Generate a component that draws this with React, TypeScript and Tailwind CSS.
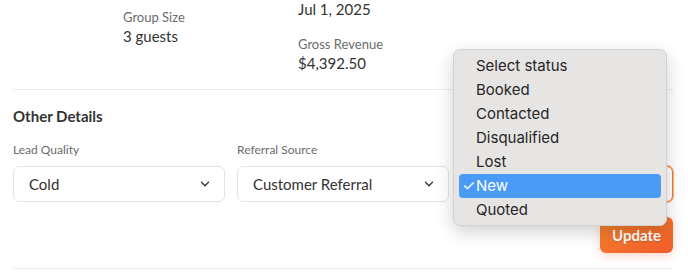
import React from 'react';
import { ChevronDown } from 'lucide-react';

const statusOptions = ['Select status', 'Booked', 'Contacted', 'Disqualified', 'Lost', 'New', 'Quoted'];

const SelectBox: React.FC<{ value?: string; focused?: boolean }> = ({ value, focused }) => (
  <div
    className={`flex h-[36px] items-center justify-between rounded-[6px] border bg-white pl-[15px] pr-[12px] text-[15px] text-[#333] ${
      focused ? 'border-[#f47a2c] ring-1 ring-[#f9b98a]' : 'border-[#e4e4e4]'
    }`}
  >
    <span>{value}</span>
    <ChevronDown className="h-[14px] w-[14px] text-[#333]" strokeWidth={2.2} />
  </div>
);

const StatusMenu: React.FC = () => (
  <div
    className="absolute left-[453px] top-[49px] w-[214px] rounded-[7px] border border-[#d2d1cf] bg-[#e6e5e3] px-[5px] pb-[3px] pt-[4px] shadow-[0_6px_18px_rgba(0,0,0,0.18)]"
    style={{ fontFamily: 'Inter, "Noto Sans", sans-serif' }}
  >
    {statusOptions.map(opt => {
      const selected = opt === 'New';
      return (
        <div
          key={opt}
          className={`relative flex h-[24px] items-center rounded-[4px] pl-[17px] text-[15px] ${
            selected ? 'bg-[#4a9bf8] text-white' : 'text-[#262626]'
          }`}
        >
          {selected && <span className="absolute left-[3px] text-[15px]">✓</span>}
          {opt}
        </div>
      );
    })}
  </div>
);

export default function App() {
  return (
    <div
      className="relative h-[275px] w-[688px] overflow-hidden bg-white pl-[13px] pr-[15px]"
      style={{ fontFamily: 'Lato, "Open Sans", sans-serif' }}
    >
      {/* Summary */}
      <div className="flex items-start pl-[110px]">
        <div className="w-[175px] pt-[8px]">
          <div className="text-[13px] leading-[18px] text-[#6b6b6b]">Group Size</div>
          <div className="mt-[1px] text-[15px] leading-[18px] text-[#333]">3 guests</div>
        </div>
        <div>
          <div className="text-[15px] leading-[18px] text-[#333]">Jul 1, 2025</div>
          <div className="mt-[17px] text-[13px] leading-[18px] text-[#6b6b6b]">Gross Revenue</div>
          <div className="mt-[1px] text-[15px] leading-[18px] text-[#333]">$4,392.50</div>
        </div>
      </div>

      <div className="mt-[17px] border-t border-[#ececec]" />

      {/* Other Details */}
      <h3 className="mt-[15px] text-[15px] font-bold leading-[22px] text-[#333]">Other Details</h3>

      <div className="mt-[15px] grid grid-cols-3 gap-[12px]">
        <div>
          <div className="mb-[8px] text-[12px] leading-[16px] text-[#6b6b6b]">Lead Quality</div>
          <SelectBox value="Cold" />
        </div>
        <div>
          <div className="mb-[8px] text-[12px] leading-[16px] text-[#6b6b6b]">Referral Source</div>
          <SelectBox value="Customer Referral" />
        </div>
        <div>
          {/* label sits under the open menu */}
          <div className="mb-[8px] h-[16px]" />
          <SelectBox focused />
        </div>
      </div>

      <div className="mt-[15px] flex justify-end">
        <button className="h-[36px] w-[73px] rounded-[6px] bg-gradient-to-br from-[#f6862d] to-[#f15a2b] text-[15px] font-bold text-white shadow-[0_3px_10px_rgba(241,90,43,0.25)] [text-shadow:0_1px_1px_rgba(0,0,0,0.15)]">
          Update
        </button>
      </div>

      <div className="mt-[15px] border-t border-[#ececec]" />

      <StatusMenu />
    </div>
  );
}
